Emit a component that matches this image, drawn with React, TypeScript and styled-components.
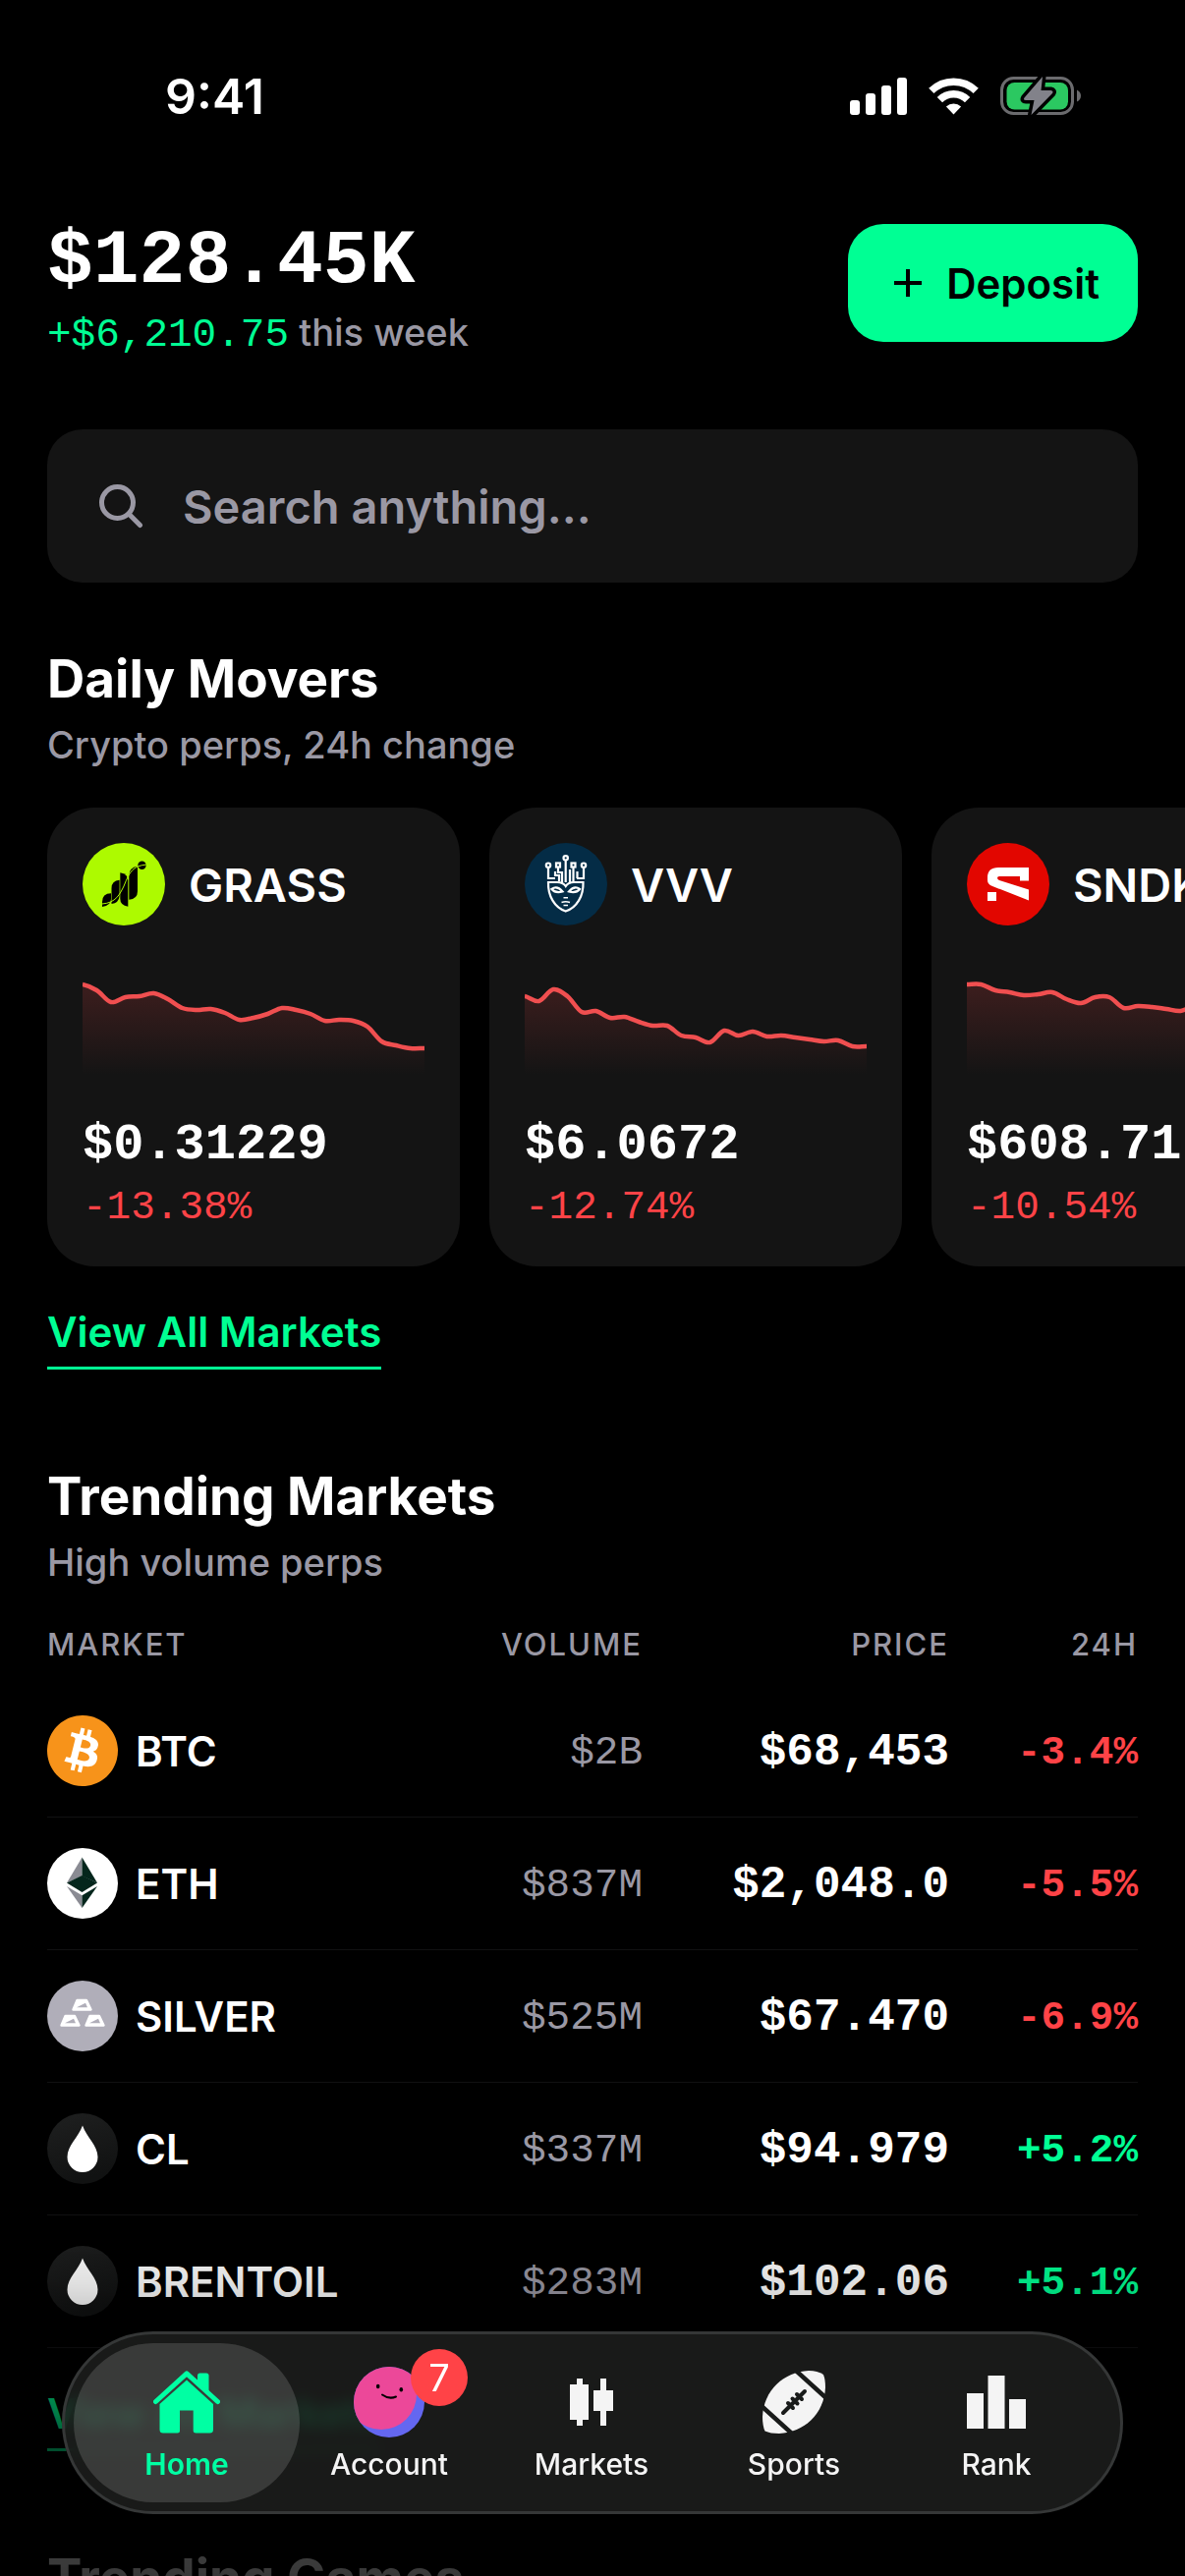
import React from "react";
import styled, { createGlobalStyle } from "styled-components";
import { SiBitcoin } from "react-icons/si";

const color = {
  green: "#00ff94",
  mint: "#00ffa3",
  red: "#ff4347",
  grey: "#9a98a4",
  card: "#141414",
  line: "#111112",
};

const sans = `Inter, "Liberation Sans", sans-serif`;
const mono = `"Liberation Mono", "DejaVu Sans Mono", monospace`;

const Global = createGlobalStyle`
  *, *::before, *::after { box-sizing: border-box; }
  body { margin: 0; background: #000; }
  button, input { font: inherit; color: inherit; border: 0; padding: 0; background: none; }
  h2, p { margin: 0; }
`;

const Screen = styled.div`
  height: 100vh;
  overflow-x: hidden;
  overflow-y: auto;
  scrollbar-width: none;
  background: #000;
  color: #fff;
  font-family: ${sans};
`;

const StatusBar = styled.div`
  display: flex;
  align-items: center;
  justify-content: space-between;
  padding: 62px 105px 80px 168px;
`;

const Time = styled.span`
  font-size: 50px;
  line-height: 72px;
  font-weight: 600;
`;

const StatusIcons = styled.div`
  display: flex;
  align-items: center;
  gap: 22px;
  svg { display: block; }
`;

const Main = styled.main`
  display: flex;
  flex-direction: column;
  padding: 0 48px 300px;
`;

const Header = styled.header`
  display: flex;
  align-items: center;
  justify-content: space-between;
`;

const Summary = styled.div`
  padding-top: 4px;
`;

const Balance = styled.div`
  font-family: ${mono};
  font-size: 78px;
  line-height: 96px;
  font-weight: 700;
`;

const Muted = styled.p`
  font-size: 38px;
  line-height: 48px;
  font-weight: 500;
  color: ${color.grey};
`;

const Gain = styled.span`
  font-family: ${mono};
  font-size: 41px;
  line-height: 1;
  font-weight: 400;
  color: ${color.green};
`;

const DepositButton = styled.button`
  display: flex;
  align-items: center;
  justify-content: center;
  gap: 24px;
  min-width: 294px;
  height: 120px;
  padding: 0 39px 0 46px;
  border-radius: 36px;
  background: ${color.green};
  color: #000;
  font-size: 42px;
  font-weight: 600;
`;

const SearchBox = styled.label`
  display: flex;
  align-items: center;
  gap: 40px;
  height: 156px;
  margin-top: 75px;
  padding: 0 52px;
  border-radius: 36px;
  background: ${color.card};
`;

const SearchInput = styled.input`
  flex: 1;
  min-width: 0;
  outline: none;
  font-size: 47px;
  font-weight: 600;
  &::placeholder { color: ${color.grey}; opacity: 1; }
`;

const Section = styled.section<{ $gap: number }>`
  display: flex;
  flex-direction: column;
  align-items: stretch;
  margin-top: ${(p) => p.$gap}px;
`;

const SectionTitle = styled.h2`
  font-size: 53px;
  line-height: 66px;
  font-weight: 700;
  margin-bottom: 10px;
`;

const Carousel = styled.div`
  display: flex;
  gap: 30px;
  margin: 40px -48px 0 0;
  overflow: hidden;
`;

const MoverCard = styled.article`
  flex: 0 0 420px;
  padding: 36px;
  border-radius: 48px;
  background: ${color.card};
`;

const CardHead = styled.div`
  display: flex;
  align-items: center;
  gap: 24px;
  margin-bottom: 36px;
  font-size: 47px;
  font-weight: 600;
  svg { display: block; }
`;

const ChartSvg = styled.svg`
  display: block;
  margin-bottom: 42px;
`;

const CardPrice = styled.div`
  font-family: ${mono};
  font-size: 52px;
  line-height: 60px;
  font-weight: 700;
  margin-bottom: 9px;
`;

const CardChange = styled.div`
  font-family: ${mono};
  font-size: 41px;
  line-height: 48px;
  color: ${color.red};
`;

const MoreLink = styled.a`
  align-self: flex-start;
  margin-top: 40px;
  padding-bottom: 8px;
  border-bottom: 3px solid ${color.green};
  color: ${color.green};
  font-size: 42px;
  line-height: 54px;
  font-weight: 600;
  text-decoration: none;
`;

const Table = styled.table`
  width: 100%;
  margin-top: 40px;
  border-collapse: separate;
  border-spacing: 0;
  table-layout: fixed;
`;

const HeadCell = styled.th<{ $width: string; $left?: boolean }>`
  width: ${(p) => p.$width};
  padding: 0 0 21px;
  text-align: ${(p) => (p.$left ? "left" : "right")};
  font-size: 31px;
  line-height: 40px;
  font-weight: 500;
  letter-spacing: 2px;
  color: ${color.grey};
`;

const Cell = styled.td`
  height: 135px;
  padding: 4px 0 0;
  border-bottom: 1px solid ${color.line};
  text-align: right;
  font-family: ${mono};
  font-size: 41px;
`;

const NameCell = styled(Cell)`
  padding: 0;
  font-family: ${sans};
  font-size: 42px;
  font-weight: 600;
`;

const Asset = styled.div`
  display: flex;
  align-items: center;
  gap: 18px;
  svg { display: block; flex: none; }
`;

const VolumeCell = styled(Cell)`
  color: ${color.grey};
`;

const PriceCell = styled(Cell)`
  font-size: 46px;
  font-weight: 700;
`;

const ChangeCell = styled(Cell)<{ $up: boolean }>`
  font-weight: 700;
  color: ${(p) => (p.$up ? color.green : color.red)};
`;

const CoinDisc = styled.span`
  display: block;
  border-radius: 50%;
  background: radial-gradient(circle, #fff 65%, transparent 66%);
  color: #f7931a;
`;

const BottomFade = styled.div`
  position: fixed;
  left: 0;
  right: 0;
  bottom: 0;
  height: 372px;
  pointer-events: none;
  background: linear-gradient(
    rgba(0, 0, 0, 0) 0%,
    rgba(0, 0, 0, 0.12) 20%,
    rgba(0, 0, 0, 0.52) 56%,
    rgba(0, 0, 0, 0.7) 66%,
    rgba(0, 0, 0, 0.78) 100%
  );
`;

const TabBar = styled.nav`
  position: fixed;
  left: 63px;
  right: 63px;
  bottom: 63px;
  display: flex;
  padding: 9px 23px 9px 21px;
  border: 3px solid #353737;
  border-radius: 93px;
  background: rgba(34, 36, 35, 0.72);
  backdrop-filter: blur(8px);
`;

const Tab = styled.button<{ $active?: boolean }>`
  position: relative;
  flex: 1 1 0;
  display: flex;
  flex-direction: column;
  align-items: center;
  gap: 9px;
  height: 162px;
  padding-top: 24px;
  font-size: 30px;
  line-height: 36px;
  font-weight: ${(p) => (p.$active ? 600 : 500)};
  color: ${(p) => (p.$active ? color.mint : "#f4f4f4")};
  &::before {
    content: "";
    position: absolute;
    inset: 0 -12px;
    z-index: -1;
    border-radius: 81px;
    background: ${(p) => (p.$active ? "rgba(255,255,255,0.14)" : "none")};
  }
`;

const TabIcon = styled.span`
  position: relative;
  display: grid;
  place-items: center;
  width: 72px;
  height: 72px;
  svg { display: block; }
`;

const Badge = styled.span`
  position: absolute;
  left: 58px;
  top: -18px;
  width: 58px;
  height: 58px;
  border-radius: 50%;
  background: ${color.red};
  color: #fff;
  font-size: 38px;
  line-height: 58px;
  font-weight: 400;
  text-align: center;
`;

/* ---------- status icons ---------- */

const Signal = () => (
  <svg width="58" height="38" viewBox="0 0 58 38" fill="#fff" aria-hidden="true">
    <rect x="0" y="23" width="10" height="15" rx="3" />
    <rect x="16" y="16" width="10" height="22" rx="3" />
    <rect x="32" y="8" width="10" height="30" rx="3" />
    <rect x="48" y="0" width="10" height="38" rx="3" />
  </svg>
);

const Wifi = () => (
  <svg width="51" height="38" viewBox="0 0 51 38" fill="none" aria-hidden="true">
    <path d="M2.8 13.4a32.5 32.5 0 0 1 45.4 0" stroke="#fff" strokeWidth="7.5" />
    <path d="M11.4 22.6a20 20 0 0 1 28.2 0" stroke="#fff" strokeWidth="7.5" />
    <path d="M25.5 37.6l-7.6-8a11 11 0 0 1 15.2 0z" fill="#fff" />
  </svg>
);

const Battery = () => (
  <svg width="83" height="42" viewBox="0 0 83 42" fill="none" aria-hidden="true">
    <rect x="1.5" y="2.5" width="72" height="36" rx="12" stroke="#6b6b6e" strokeWidth="3" />
    <path d="M78 14.5q4 2 4 6t-4 6z" fill="#6b6b6e" />
    <rect x="6.5" y="7" width="62.5" height="27.5" rx="8" fill="#2bc861" />
    <path
      d="M43 1L24.5 22.5Q23 25 26 25H34.5L31.5 40L53 18Q54.5 15.5 51.5 15H41.5Z"
      fill="#82828a"
      stroke="#000"
      strokeWidth="7"
      strokeLinejoin="round"
      paintOrder="stroke"
    />
  </svg>
);

/* ---------- coin logos ---------- */

const GrassLogo = () => (
  <svg width="84" height="84" viewBox="0 0 84 84" aria-hidden="true">
    <circle cx="42" cy="42" r="42" fill="#adfa00" />
    <path d="M20 65V60Q20 51.5 29 51.3V57Q29 63.5 20 65Z" />
    <path d="M29.5 62V46Q29.5 38.5 37.6 37.7V54Q37 61 29.5 62Z" />
    <path d="M38.3 30.3Q46.3 32 46.3 38V64.7Q38.3 63.5 38.3 57Z" />
    <path d="M47.3 57.7V33Q47.3 25 56 23.7V49Q56 57 47.3 57.7Z" />
    <circle cx="60.5" cy="22.7" r="4.2" />
    <path d="M20 62C34 61 38 52 42 44C48 29 51 23.5 65 22" fill="none" stroke="#adfa00" strokeWidth="1" />
  </svg>
);

const VvvLogo = () => (
  <svg width="84" height="84" viewBox="0 0 84 84" aria-hidden="true">
    <circle cx="42" cy="42" r="42" fill="#042c46" />
    <g fill="none" stroke="#fff" strokeWidth="2.2">
      <path d="M24 40H33Q39 40 41.7 44Q44.5 40 50 40H59.5C60 54 53 66 41.7 69.5C30.5 66 23.5 54 24 40Z" />
      <path d="M27.5 47Q33 43 38.5 49.5Q31 51.5 27.5 47Z" />
      <path d="M56 47Q50.5 43 45 49.5Q52.5 51.5 56 47Z" />
      <path d="M39.5 55.8H44M37.5 60.5Q41.7 59 46 60.5M39.5 63.5H44" strokeWidth="1.6" />
      <circle cx="24" cy="22.7" r="2.2" />
      <circle cx="41.7" cy="15.3" r="2.2" />
      <circle cx="60" cy="22.7" r="2.2" />
      <rect x="32" y="20.5" width="4" height="4" />
      <rect x="47.5" y="20.5" width="4" height="4" />
      <path d="M24 25V36H31M60 25V36H53M41.7 18V40M34 25V30H38V40M49.5 25V40M46 27V40M31 29V33H35V39M53.5 29V36" />
    </g>
  </svg>
);

const SndkLogo = () => (
  <svg width="84" height="84" viewBox="0 0 84 84" aria-hidden="true">
    <circle cx="42" cy="42" r="42" fill="#e20600" />
    <path
      d="M63 25H32Q21 25 21 35V38Q21 42 26 44L63 58.5V47.5L33 38Q31 37 31 35.5T33 34H54V38.5H63Z"
      fill="#fff"
    />
    <rect x="21" y="50" width="9" height="9" fill="#fff" />
  </svg>
);

const BtcLogo = () => (
  <CoinDisc>
    <SiBitcoin size={72} aria-hidden="true" />
  </CoinDisc>
);

const EthLogo = () => (
  <svg width="72" height="72" viewBox="0 0 72 72" aria-hidden="true">
    <circle cx="36" cy="36" r="36" fill="#fff" />
    <path d="M35.5 9.5L20 35.5L35.5 28.5Z" fill="#8a8b93" />
    <path d="M35.5 9.5L51 35.5L35.5 28.5Z" fill="#04261c" />
    <path d="M35.5 28L20 35.5L35.5 45L51 35.5Z" fill="#04261c" />
    <path d="M20 39L35.5 48.2V61Z" fill="#8a8b93" />
    <path d="M51 39L35.5 48.2V61Z" fill="#04261c" />
  </svg>
);

const Ingot = ({ x, y }: { x: number; y: number }) => (
  <g transform={`translate(${x} ${y})`}>
    <path
      d="M5.5 1H15L19.5 10.5H1.5Z"
      fill="#fff"
      stroke="#fff"
      strokeWidth="2.4"
      strokeLinejoin="round"
    />
    <path d="M5 8.2L14 3.8L16 8.2Z" fill="#b0aeb9" />
  </g>
);

const SilverLogo = () => (
  <svg width="72" height="72" viewBox="0 0 72 72" aria-hidden="true">
    <circle cx="36" cy="36" r="36" fill="#b0aeb9" />
    <Ingot x={25} y={19} />
    <Ingot x={13} y={35} />
    <Ingot x={38} y={35} />
  </svg>
);

const OilLogo = () => (
  <svg width="72" height="72" viewBox="0 0 72 72" aria-hidden="true">
    <defs>
      <linearGradient id="oil" x1="0" y1="0" x2="0.3" y2="1">
        <stop offset="0" stopColor="#1f2020" />
        <stop offset="1" stopColor="#111212" />
      </linearGradient>
    </defs>
    <circle cx="36" cy="36" r="36" fill="url(#oil)" />
    <path d="M36 12.5C40 24 51.5 33 51.5 44.5A15.5 15.5 0 0 1 20.5 44.5C20.5 33 32 24 36 12.5Z" fill="#fff" />
  </svg>
);

/* ---------- tab icons ---------- */

const HomeIcon = () => (
  <svg width="68" height="64" viewBox="0 0 68 64" fill="currentColor" aria-hidden="true">
    <path d="M2.5 31.5L34 2.8L65.5 31.5" fill="none" stroke="currentColor" strokeWidth="5" strokeLinecap="round" strokeLinejoin="round" />
    <path d="M45 13V5Q45 2.5 47.5 2.5H54Q56.5 2.5 56.5 5V23Z" />
    <path d="M34 9.5L61 34V60Q61 63.5 57.5 63.5H43.5Q40.7 63.5 40.7 61V40.5H27V61Q27 63.5 24.5 63.5H10Q6.5 63.5 6.5 60V34Z" />
  </svg>
);

const Avatar = () => (
  <svg width="72" height="72" viewBox="0 0 72 72" aria-hidden="true">
    <clipPath id="face"><circle cx="36" cy="36" r="36" /></clipPath>
    <g clipPath="url(#face)">
      <rect width="72" height="72" fill="#6467f0" />
      <circle cx="28" cy="28" r="36" fill="#ec4899" />
    </g>
    <ellipse cx="24.7" cy="20" rx="1.8" ry="2.2" />
    <ellipse cx="48.3" cy="23.2" rx="1.8" ry="2.2" />
    <path d="M29 28.5Q36 33.5 43 30.5" fill="none" stroke="#000" strokeWidth="2" strokeLinecap="round" />
  </svg>
);

const CandlesIcon = () => (
  <svg width="44" height="48" viewBox="0 0 44 48" fill="currentColor" aria-hidden="true">
    <path d="M7 0H13V6H19V42H13V48H7V42H0V6H7Z" />
    <path d="M31 0H37V12H44V33H37V48H31V33H24V12H31Z" />
  </svg>
);

const FootballIcon = () => (
  <svg width="64" height="64" viewBox="0 0 64 64" aria-hidden="true">
    <path d="M62 4Q64 9 64 17C63 44 42 63 17 64Q8 64 2.5 61.5Q0 56 0 47C1 20 22 1 47 0Q56 0 62 4Z" fill="currentColor" />
    <g stroke="#191b1a" strokeWidth="4.5" fill="none">
      <path d="M33 -1L65 28M-1 36L31 65" />
      <path d="M21 43L43 21M26 33L31 38M30.5 28.5L35.5 33.5M35 24L40 29" strokeWidth="4" strokeLinecap="round" />
    </g>
  </svg>
);

const RankIcon = () => (
  <svg width="60" height="54" viewBox="0 0 60 54" fill="currentColor" aria-hidden="true">
    <rect x="0" y="18" width="17" height="36" />
    <rect x="21.5" y="0" width="17" height="54" />
    <rect x="43" y="24" width="17" height="30" />
  </svg>
);

/* ---------- sparkline ---------- */

const CHART_W = 348;
const CHART_H = 116;

function smooth(values: number[]) {
  const step = CHART_W / (values.length - 1);
  return values.reduce((path, y, i) => {
    if (i === 0) return `M0 ${y}`;
    const x0 = (i - 1) * step;
    const x1 = i * step;
    const prev = values[Math.max(i - 2, 0)];
    const from = values[i - 1];
    const next = values[Math.min(i + 1, values.length - 1)];
    const c1 = from + (y - prev) / 6;
    const c2 = y - (next - from) / 6;
    return `${path}C${x0 + step / 3} ${c1} ${x1 - step / 3} ${c2} ${x1} ${y}`;
  }, "");
}

const Sparkline = ({ id, values }: { id: string; values: number[] }) => {
  const line = smooth(values);
  return (
    <ChartSvg width={CHART_W} height={CHART_H} viewBox={`0 0 ${CHART_W} ${CHART_H}`} aria-hidden="true">
      <defs>
        <linearGradient id={id} gradientUnits="userSpaceOnUse" x1="0" y1="10" x2="0" y2={CHART_H}>
          <stop offset="0" stopColor="#ff4b4b" stopOpacity="0.2" />
          <stop offset="1" stopColor="#ff4b4b" stopOpacity="0" />
        </linearGradient>
      </defs>
      <path d={`${line}V${CHART_H}H0Z`} fill={`url(#${id})`} />
      <path d={line} fill="none" stroke="#f04f50" strokeWidth="4.5" />
    </ChartSvg>
  );
};

/* ---------- data ---------- */

const movers = [
  {
    name: "GRASS",
    Logo: GrassLogo,
    price: "$0.31229",
    change: "-13.38%",
    values: [24, 30, 42, 37, 36, 33, 39, 48, 50, 49, 53, 60, 58, 54, 48, 50, 54, 61, 60, 61, 67, 82, 86, 89, 89],
  },
  {
    name: "VVV",
    Logo: VvvLogo,
    price: "$6.0672",
    change: "-12.74%",
    values: [36, 41, 29, 36, 52, 51, 58, 57, 62, 66, 66, 76, 78, 83, 71, 76, 72, 77, 76, 78, 80, 82, 81, 87, 87],
  },
  {
    name: "SNDK",
    Logo: SndkLogo,
    price: "$608.71",
    change: "-10.54%",
    values: [24, 24, 30, 32, 35, 34, 32, 39, 43, 37, 37, 48, 46, 47, 49, 51, 46, 50, 56, 60, 66, 70, 76, 80, 82],
  },
];

const markets = [
  { name: "BTC", Logo: BtcLogo, volume: "$2B", price: "$68,453", change: "-3.4%" },
  { name: "ETH", Logo: EthLogo, volume: "$837M", price: "$2,048.0", change: "-5.5%" },
  { name: "SILVER", Logo: SilverLogo, volume: "$525M", price: "$67.470", change: "-6.9%" },
  { name: "CL", Logo: OilLogo, volume: "$337M", price: "$94.979", change: "+5.2%" },
  { name: "BRENTOIL", Logo: OilLogo, volume: "$283M", price: "$102.06", change: "+5.1%" },
];

const tabs = [
  { name: "Home", Icon: HomeIcon },
  { name: "Account", Icon: Avatar, badge: 7 },
  { name: "Markets", Icon: CandlesIcon },
  { name: "Sports", Icon: FootballIcon },
  { name: "Rank", Icon: RankIcon },
];

export default function App() {
  return (
    <Screen>
      <Global />
      <StatusBar>
        <Time>9:41</Time>
        <StatusIcons>
          <Signal />
          <Wifi />
          <Battery />
        </StatusIcons>
      </StatusBar>
      <Main>
        <Header>
          <Summary>
            <Balance>$128.45K</Balance>
            <Muted>
              <Gain>+$6,210.75</Gain> this week
            </Muted>
          </Summary>
          <DepositButton type="button">
            <svg width="30" height="30" viewBox="0 0 30 30" stroke="#000" strokeWidth="4" aria-hidden="true">
              <path d="M15 1V29M1 15H29" />
            </svg>
            Deposit
          </DepositButton>
        </Header>

        <SearchBox>
          <svg width="46" height="46" viewBox="0 0 46 46" fill="none" stroke={color.grey} strokeWidth="5" strokeLinecap="round" aria-hidden="true">
            <circle cx="19.5" cy="19.5" r="16" />
            <path d="M31.5 31.5L42.5 42.5" />
          </svg>
          <SearchInput type="text" aria-label="Search" placeholder="Search anything..." />
        </SearchBox>

        <Section $gap={65}>
          <SectionTitle>Daily Movers</SectionTitle>
          <Muted>Crypto perps, 24h change</Muted>
          <Carousel>
            {movers.map(({ name, Logo, price, change, values }) => (
              <MoverCard key={name}>
                <CardHead>
                  <Logo />
                  {name}
                </CardHead>
                <Sparkline id={`area-${name}`} values={values} />
                <CardPrice>{price}</CardPrice>
                <CardChange>{change}</CardChange>
              </MoverCard>
            ))}
          </Carousel>
          <MoreLink href="#markets">View All Markets</MoreLink>
        </Section>

        <Section $gap={96}>
          <SectionTitle>Trending Markets</SectionTitle>
          <Muted>High volume perps</Muted>
          <Table>
            <thead>
              <tr>
                <HeadCell scope="col" $width="auto" $left>MARKET</HeadCell>
                <HeadCell scope="col" $width="260px">VOLUME</HeadCell>
                <HeadCell scope="col" $width="312px">PRICE</HeadCell>
                <HeadCell scope="col" $width="192px">24H</HeadCell>
              </tr>
            </thead>
            <tbody>
              {markets.map(({ name, Logo, volume, price, change }) => (
                <tr key={name}>
                  <NameCell>
                    <Asset>
                      <Logo />
                      {name}
                    </Asset>
                  </NameCell>
                  <VolumeCell>{volume}</VolumeCell>
                  <PriceCell>{price}</PriceCell>
                  <ChangeCell $up={change.startsWith("+")}>{change}</ChangeCell>
                </tr>
              ))}
            </tbody>
          </Table>
          <MoreLink href="#markets">View All Markets</MoreLink>
        </Section>

        <Section $gap={96}>
          <SectionTitle>Trending Games</SectionTitle>
        </Section>
      </Main>

      <BottomFade />
      <TabBar>
        {tabs.map(({ name, Icon, badge }, i) => (
          <Tab key={name} type="button" $active={i === 0}>
            <TabIcon>
              <Icon />
              {badge && <Badge>{badge}</Badge>}
            </TabIcon>
            {name}
          </Tab>
        ))}
      </TabBar>
    </Screen>
  );
}
